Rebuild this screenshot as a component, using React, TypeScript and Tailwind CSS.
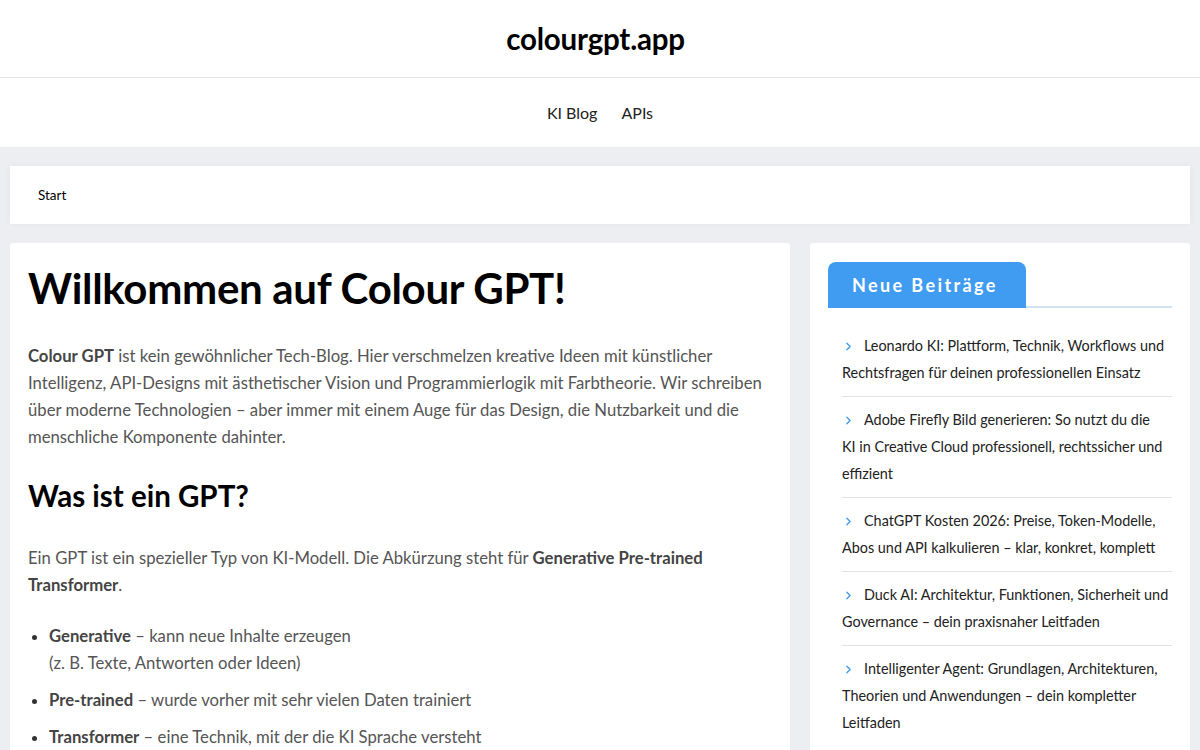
import { ChevronRight } from "lucide-react";

const posts = [
    "Leonardo KI: Plattform, Technik, Workflows und Rechtsfragen für deinen professionellen Einsatz",
    "Adobe Firefly Bild generieren: So nutzt du die KI\u00a0in Creative Cloud professionell, rechtssicher und effizient",
    "ChatGPT Kosten 2026: Preise, Token-Modelle, Abos und API kalkulieren – klar, konkret, komplett",
    "Duck AI: Architektur, Funktionen, Sicherheit und Governance – dein praxisnaher Leitfaden",
    "Intelligenter Agent: Grundlagen, Architekturen, Theorien und Anwendungen – dein kompletter Leitfaden",
];

export default function App() {
    return (
        <div className="min-h-screen bg-[#eceef2] font-['Lato',sans-serif] text-[#222]">
            {/* Site title */}
            <header className="bg-white h-[78px] flex items-center justify-center border-b border-[#e4e4e4]">
                <h1 className="text-[29.5px] font-bold tracking-[-0.2px] text-black pt-[2px] pr-[9px]">colourgpt.app</h1>
            </header>

            {/* Navigation */}
            <nav className="bg-white h-[69px] flex items-center justify-center gap-6 text-[16px] text-[#222]">
                <a>KI Blog</a>
                <a>APIs</a>
            </nav>

            <div className="px-[10px] pt-[19px]">
                {/* Breadcrumb */}
                <div className="bg-white h-[58px] flex items-center px-[28px] text-[13.5px] text-black shadow-[0_0_6px_rgba(0,0,0,0.04)]">
                    Start
                </div>

                <div className="flex gap-[20px] mt-[19px] items-start">
                    {/* Main content */}
                    <main className="w-[780px] bg-white px-[18px] pt-[21px] pb-10 rounded-[3px]">
                        <h2 className="text-[42px] font-bold text-black leading-[48px] tracking-[-0.3px]">
                            Willkommen auf Colour GPT!
                        </h2>
                        <p className="mt-[31px] text-[16.7px] leading-[27px] text-[#555]">
                            <strong className="font-bold text-[#444]">Colour GPT</strong> ist kein gewöhnlicher Tech-Blog. Hier verschmelzen kreative Ideen mit künstlicher Intelligenz, API-Designs mit ästhetischer Vision und Programmierlogik mit Farbtheorie. Wir schreiben über moderne Technologien – aber immer mit einem Auge für das Design, die Nutzbarkeit und die menschliche Komponente dahinter.
                        </p>
                        <h3 className="mt-[27px] text-[29.5px] font-bold text-black leading-[36px]">Was ist ein GPT?</h3>
                        <p className="mt-[31px] text-[16.7px] leading-[27px] text-[#555]">
                            Ein GPT ist ein spezieller Typ von KI-Modell. Die Abkürzung steht für{" "}
                            <strong className="font-bold text-[#444]">Generative Pre-trained Transformer</strong>.
                        </p>
                        <ul className="mt-[24px] list-disc pl-[21px] text-[16.7px] leading-[27px] text-[#555] marker:text-[#333] space-y-[10px]">
                            <li>
                                <strong className="font-bold text-[#444]">Generative</strong> – kann neue Inhalte erzeugen
                                <br />
                                (z. B. Texte, Antworten oder Ideen)
                            </li>
                            <li>
                                <strong className="font-bold text-[#444]">Pre-trained</strong> – wurde vorher mit sehr vielen Daten trainiert
                            </li>
                            <li>
                                <strong className="font-bold text-[#444]">Transformer</strong> – eine Technik, mit der die KI Sprache versteht
                            </li>
                        </ul>
                    </main>

                    {/* Sidebar */}
                    <aside className="flex-1 bg-white px-[18px] pt-[19px] pb-6 rounded-[3px]">
                        <div className="flex items-end border-b-2 border-[#cfe3f5]">
                            <div className="bg-[#3f9cf0] rounded-t-[8px] w-[198px] h-[46px] flex items-center pl-[24px] -mb-[2px]">
                                <span className="text-white font-bold text-[18px] tracking-[2.4px]">Neue Beiträge</span>
                            </div>
                        </div>
                        <ul className="pl-[14px] mt-[24px]">
                            {posts.map((title, i) => (
                                <li
                                    key={title}
                                    className={`text-[14.4px] leading-[27px] text-[#222] py-[9.5px] ${i < posts.length - 1 ? "border-b border-[#e2e2e2]" : ""} ${i === 0 ? "pt-0" : ""}`}
                                >
                                    <ChevronRight className="inline-block w-[13px] h-[13px] text-[#3f9cf0] mr-[9px] -mt-[2px]" strokeWidth={2.5} />
                                    {title}
                                </li>
                            ))}
                        </ul>
                    </aside>
                </div>
            </div>
        </div>
    );
}
